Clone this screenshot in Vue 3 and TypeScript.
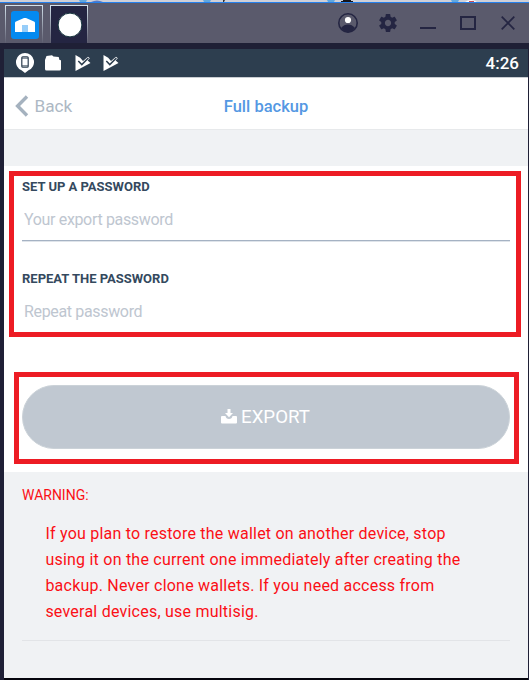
<script setup lang="ts">
import { ref } from 'vue'

const password = ref('')
const repeated = ref('')
const warningLines: string[] = [
  'If you plan to restore the wallet on another device, stop',
  'using it on the current one immediately after creating the',
  'backup. Never clone wallets. If you need access from',
  'several devices, use multisig.',
]
</script>

<template>
  <div class="window">
    <svg class="desktop" width="529" height="3" viewBox="0 0 529 3">
      <rect width="529" height="3" fill="#cfd0d8" />
      <path d="M79 0h8l-1 2h-6zM203 0h8l-1 2h-6zM327 0h8l-1 2h-6zM451 0h8l-1 2h-6z" fill="#62a8df" />
      <path d="M91 2q6-3 12 0z" fill="#5579c8" />
      <path d="M223 0h2l-1 2h-1z" fill="#333" />
      <path d="M341 2V1h2V0h8v1h2v1z" fill="#15151b" />
      <path d="M465 2q6-4 12 0z" fill="#fff" /><path d="M469 1h5v1h-5z" fill="#c94d55" />
      <rect y="2" width="529" height="1" fill="#2680eb" />
    </svg>
    <header class="titlebar">
      <div class="tab">
        <svg width="28" height="28" viewBox="0 0 28 28">
          <rect width="28" height="28" rx="3" fill="#048af0" />
          <path d="M4 12q0-1 1-1.400L13 7h2l8 3.600q1 .4 1 1.400v9H4z" fill="#fff" />
          <path d="M11 14h6v7h-6z" fill="#96cdf9" />
        </svg>
      </div>
      <div class="tab active">
        <svg width="28" height="28" viewBox="0 0 28 28">
          <circle cx="14" cy="14" r="11.900" fill="#fff" stroke="#14333c" stroke-width="1" />
        </svg>
      </div>
      <div class="controls">
        <svg width="20" height="20" viewBox="0 0 20 20">
          <circle cx="10" cy="10" r="9.200" fill="none" stroke="#242542" stroke-width="1.600" />
          <circle cx="10" cy="7" r="3.100" fill="#fff" />
          <path d="M3 15q3-3.400 7-3.400t7 3.400q-3 4.200-7 4.200T3 15z" fill="#242542" />
        </svg>
        <svg width="18" height="18" viewBox="2.200 2 19.600 20">
          <path fill="#242542" d="M19.430 12.980c.04-.32.070-.64.070-.98s-.03-.66-.07-.98l2.110-1.650c.19-.15.240-.42.120-.64l-2-3.460c-.12-.22-.39-.3-.61-.22l-2.490 1c-.52-.4-1.080-.73-1.690-.98l-.38-2.650C14.460 2.180 14.250 2 14 2h-4c-.25 0-.46.180-.49.420l-.38 2.650c-.61.250-1.170.590-1.690.980l-2.490-1c-.23-.09-.49 0-.61.220l-2 3.460c-.13.220-.07.490.12.640l2.110 1.650c-.04.320-.07.650-.07.980s.03.660.07.980l-2.110 1.650c-.19.150-.24.420-.12.640l2 3.460c.12.220.390.300.610.220l2.490-1c.52.400 1.080.730 1.690.980l.38 2.650c.03.240.240.420.490.420h4c.25 0 .46-.18.490-.42l.38-2.650c.61-.25 1.170-.59 1.690-.98l2.490 1c.23.090.49 0 .61-.22l2-3.460c.12-.22.070-.49-.12-.64l-2.110-1.650zM12 15.500c-1.930 0-3.500-1.570-3.500-3.500s1.570-3.500 3.500-3.500 3.500 1.570 3.500 3.500-1.570 3.500-3.500 3.500z" />
        </svg>
        <svg width="16" height="16" viewBox="0 0 16 16"><path d="M0 12h16v2H0z" fill="#242542" /></svg>
        <svg width="16" height="14" viewBox="0 0 16 14"><path d="M1 1h14v12H1z" fill="none" stroke="#242542" stroke-width="2" /></svg>
        <svg width="14" height="14" viewBox="0 0 14 14"><path d="M.7.7l12.600 12.600M13.300.7L.7 13.300" stroke="#242542" stroke-width="1.700" /></svg>
      </div>
    </header>
    <main class="device">
      <div class="status">
        <svg width="18" height="20" viewBox="0 0 18 20">
          <path d="M9 0a9 9 0 0 0-3.500 17.300L9 20l3.500-2.700A9 9 0 0 0 9 0z" fill="#fff" />
          <rect x="5.800" y="3.800" width="6.400" height="10.400" rx="1" fill="#fff" stroke="#2d3e4f" stroke-width="1.200" />
          <path d="M6 5.300h6M6 12.700h6" stroke="#2d3e4f" stroke-width=".7" />
        </svg>
        <svg class="folder" width="16" height="16" viewBox="0 0 16 16">
          <path d="M0 5l1.500-4L7 .2l1.500 1.300 5.200.4.800 3.100h.8q.7 0 .7.700V14q0 1.500-1.500 1.500h-13Q0 15.500 0 14z" fill="#fff" />
        </svg>
        <svg v-for="n in 2" :key="n" class="play" width="16" height="16" viewBox="0 0 16 16">
          <path d="M.5 0l4.700 2.700L8 6l5-4.300 1.800 1.600-2.200 2.300L15.500 8 .5 16z" fill="#fff" />
          <path d="M3.300 6l3.500 3.600L13.400 3" fill="none" stroke="#2d3e4f" stroke-width="1.500" />
        </svg>
        <span class="clock">4:26</span>
      </div>
      <nav class="navbar">
        <a class="back">
          <svg width="14" height="22" viewBox="0 0 14 22"><path d="M12 1.500L2.600 11l9.400 9.500" fill="none" stroke="#a5b2bf" stroke-width="3.400" /></svg>
          <span>Back</span>
        </a>
        <h1>Full backup</h1>
      </nav>
      <div class="spacer" />
      <section class="form">
        <div class="fields">
          <label class="field"><span>SET UP A PASSWORD</span><input v-model="password" type="password" placeholder="Your export password" /></label>
          <label class="field last"><span>REPEAT THE PASSWORD</span><input v-model="repeated" type="password" placeholder="Repeat password" /></label>
        </div>
        <div class="action">
          <button type="button">
            <svg width="16" height="16" viewBox="0 0 16 16">
              <path d="M0 8q0-1 1-1h3.500Q5 10 8 10t3.500-3H15q1 0 1 1v5.500q0 1-1 1H1q-1 0-1-1z" fill="#fff" />
              <path d="M6.500 0h3v4H12L8 8.300 4 4h2.500z" fill="#fff" />
            </svg>
            <span>EXPORT</span>
          </button>
        </div>
      </section>
      <section class="warning">
        <h2>WARNING:</h2>
        <p><span v-for="line in warningLines" :key="line">{{ line }}</span></p>
        <hr />
      </section>
    </main>
  </div>
</template>

<style>
body { background: #1f2036; overflow: hidden; }
</style>

<style scoped>
* { box-sizing: border-box; }
svg { display: block; flex: none; }
.window { width: 529px; height: 680px; background: #1f2036; font-family: Roboto, sans-serif; display: flex; flex-direction: column; }
.titlebar { height: 40px; flex: none; background: #5a5a6c; display: flex; padding: 2px 14px 0 5px; }
.tab { width: 38px; height: 38px; margin-right: 7px; padding: 5px 0 0 5px; border: 1px solid; border-bottom: 0; border-image: linear-gradient(#d5e4ee, #5a5a6c) 1; }
.tab.active { background: #242542; }
.controls { margin-left: auto; display: flex; align-items: center; gap: 22px; height: 36px; }
.controls svg:first-child { margin-right: -1px; }
.controls svg:nth-child(3) { margin: 0 2px 0 1px; }
.controls svg:nth-child(4) { margin-right: 3px; }
.device { margin: 6px 1px 0 4px; height: 631px; border-bottom: 2px solid #05050c; background: #f0f2f4; }
.status { height: 28px; background: #2d3e4f; display: flex; align-items: center; padding: 0 9px 0 12px; }
.folder { margin: 0 13.500px 0 11px; }
.play { margin-right: 12px; }
.clock { margin-left: auto; color: #fff; font-size: 17px; line-height: 28px; font-weight: 500; }
.navbar { height: 53px; border-top: 1px solid #c9cdd2; border-bottom: 1px solid #e7e9eb; background: #fff; display: grid; grid-template-columns: 1fr auto 1fr; align-items: center; padding: 4px 11px 0; }
.back { display: flex; align-items: center; gap: 5.500px; color: #adb8c4; font-size: 17.200px; line-height: 22px; }
h1 { margin: 0; padding-top: 2px; color: #5498e3; font-size: 16.500px; line-height: 22px; font-weight: 500; }
.spacer { height: 36px; }
.form { height: 306px; background: #fff; padding: 5px 7px 0 5px; }
.fields { height: 166px; border: 5px solid #ed1c24; padding: 1px 6px 0 8px; }
.field { display: block; height: 64px; margin-bottom: 28px; border-bottom: 1px solid #a5b2c3; box-shadow: 0 1px #dfe4ea; color: #34495e; font-size: 13px; font-weight: 700; }
.field.last { border-color: transparent; box-shadow: none; margin-bottom: 0; }
.field span { display: block; line-height: 19px; }
input { display: block; width: 100%; height: 30px; margin-top: 8px; padding: 0 2px; border: 0; outline: 0; background: transparent; font: 400 16px Roboto, sans-serif; letter-spacing: -.34px; }
input::placeholder { color: #bec6d0; opacity: 1; }
.action { margin: 35px 2px 0 5px; height: 92px; border: 5px solid #ed1c24; padding: 8px 4px 0 3px; }
button { width: 100%; height: 64px; border: 1px solid #cbd2d8; border-radius: 32px; background: #c0c8d1; color: #fff; display: flex; align-items: center; justify-content: center; gap: 4px; font: 400 18.700px Roboto, sans-serif; padding: 0 1px 0 0; }
.warning { padding: 12px 18px 0; color: #fb0f16; }
h2 { margin: 0; font-size: 14px; line-height: 22px; font-weight: 400; }
p { margin: 15px 0 0 23.400px; font-size: 16px; line-height: 26px; letter-spacing: .226px; }
p span { display: block; white-space: nowrap; }
hr { margin: 15px 0 0; border: 0; height: 1px; background: #e2e4e7; }
</style>
